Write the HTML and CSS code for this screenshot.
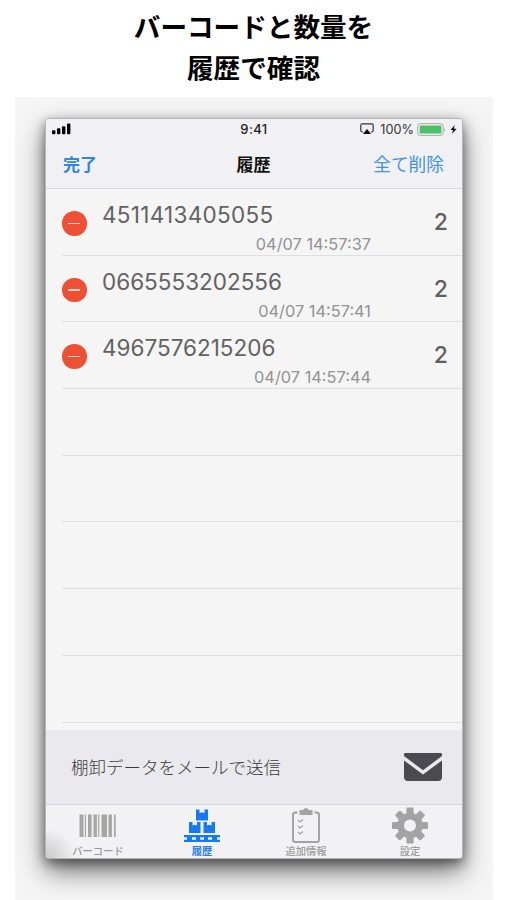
FILE: index.html
```html
<!DOCTYPE html>
<html lang="ja">
<head>
<meta charset="utf-8">
<title>履歴</title>
<link rel="stylesheet" href="styles.css">
</head>
<body>
<h1 class="headline">バーコードと数量を<br>履歴で確認</h1>
<main class="stage">
  <div class="phone">
    <header class="top">
      <div class="status">
        <svg width="20" height="12" viewBox="0 0 20 12"><rect x="1" y="7.2" width="3.4" height="4.1" rx="1"/><rect x="6" y="5.2" width="3.4" height="6.1" rx="1"/><rect x="11" y="3.2" width="3.4" height="8.1" rx="1"/><rect x="16" y="0.5" width="3.4" height="10.8" rx="1"/></svg>
        <span class="clock">9:41</span>
        <span class="power">
          <svg width="14" height="12" viewBox="0 0 14 12"><path d="M3.2 9H2.3Q.8 9 .8 7.5V2.3Q.8.8 2.3.8H11.7Q13.2.8 13.2 2.3V7.5Q13.2 9 11.7 9H10.8" fill="none" stroke="#333" stroke-width="1.2"/><path d="M7 6 11 11H3Z" fill="#000"/></svg>
          <span class="percent">100%</span>
          <svg width="29" height="13" viewBox="0 0 29 13"><rect x=".6" y=".6" width="25.6" height="11.8" rx="3" fill="#f1f1f3" stroke="#aaa" stroke-width="1"/><rect x="2.6" y="2.4" width="21.8" height="8.2" rx="1.2" fill="#4bc269"/><path d="M27.3 4.5Q29 6.5 27.3 8.5Z" fill="#aaa"/></svg>
          <svg class="bolt" width="7" height="11" viewBox="0 0 7 11"><path d="M4.7 1 .5 6.1H3L2 10 6.600 4.700H3.900Z" fill="#111"/></svg>
        </span>
      </div>
      <nav class="navbar"><span class="done">完了</span><span class="title">履歴</span><span class="clear">全て削除</span></nav>
    </header>
    <ul class="list">
      <li class="row"><i class="minus"></i><span class="code wide">4511413405055</span><time class="date">04/07 14:57:37</time><b class="count">2</b></li>
      <li class="row"><i class="minus"></i><span class="code">0665553202556</span><time class="date">04/07 14:57:41</time><b class="count">2</b></li>
      <li class="row"><i class="minus"></i><span class="code">4967576215206</span><time class="date">04/07 14:57:44</time><b class="count">2</b></li>
      <li class="row"></li><li class="row"></li><li class="row"></li><li class="row"></li><li class="row"></li>
    </ul>
    <section class="mail">
      <span>棚卸データをメールで送信</span>
      <svg width="38" height="28" viewBox="0 0 38 28"><path d="M0 3V1.2Q0 0 1.2 0H36.8Q38 0 38 1.2V3L19 17.2Z" fill="#4b4a50"/><path d="M0 7.4 19 21.4 38 7.4V24Q38 28 34 28H4Q0 28 0 24Z" fill="#4b4a50"/></svg>
    </section>
    <footer class="tabs">
      <div class="tab"><svg width="38" height="40" viewBox="0 0 38 40"><path d="M.5 9.500h4v22.500h-4zM5.800 9.500h1.200v22.500H5.800zM9 9.500h3.600v22.500H9zM14.500 9.500h3.400v22.500h-3.400zM19.100 9.500h1.200v22.500h-1.200zM22.500 9.500h5.500v22.500h-5.500zM29.500 9.500h3.400v22.500h-3.400zM35 9.500h1.700v22.500H35z" fill="#a6a6a4"/></svg><span>バーコード</span></div>
      <div class="tab active"><svg width="38" height="40" viewBox="0 0 38 40"><g fill="#147af3"><path d="M13 4.500H16.500V8L19 7.200 21.500 8V4.500H25V15.500H13Z"/><path d="M6 17H9.500V20.500L11.700 19.700 14 20.500V17H17.500V28H6ZM20.500 17H24V20.500L26.200 19.700 28.500 20.500V17H32V28H20.500Z"/><path fill-rule="evenodd" d="M1 30H37V32.300H34V34.700H37V37H1V34.700H4V32.300H1ZM9 32.300V34.700H13V32.300ZM17.200 32.300V34.700H21V32.300ZM25 32.300V34.700H29V32.300Z"/></g></svg><span>履歴</span></div>
      <div class="tab"><svg width="38" height="40" viewBox="0 0 38 40"><g fill="none" stroke="#a3a3a3"><path d="M10.500 7.500H8.500Q6 7.500 6 10V34.500Q6 37 8.500 37H29.500Q32 37 32 34.500V10Q32 7.500 29.500 7.500H27.500" stroke-width="2"/><path d="M11 15l2 2 3-2.500M11 21l2 2 3-2.500M11 27l2 2 3-2.500" stroke-width="1.200"/></g><path d="M12.500 5H16Q19 1 22 5H25.500V10H12.500Z" fill="#a3a3a3"/></svg><span>追加情報</span></div>
      <div class="tab"><svg width="38" height="40" viewBox="0 0 38 40"><g fill="#a3a3a3" transform="translate(19 20.500)"><g id="teeth"><rect x="-3.600" y="-18" width="7.200" height="36" rx="1.200"/><rect x="-18" y="-3.600" width="36" height="7.200" rx="1.200"/></g><use href="#teeth" transform="rotate(45)"/><circle r="12.800"/><circle r="6" fill="#f2f2f4"/></g></svg><span>設定</span></div>
    </footer>
  </div>
</main>
</body>
</html>
```
FILE: styles.css
```css
* { box-sizing: border-box; }
body { margin: 0; height: 900px; overflow: hidden; background: #fff; font-family: Inter, "Noto Sans CJK JP", sans-serif; }
svg { display: block; flex: none; }
.headline { margin: 0; height: 97px; padding-top: 5px; text-align: center; font: 700 26.600px/41px "Noto Sans CJK JP", sans-serif; color: #000; }
.stage { margin: 0 14px 0 15px; height: 803px; padding: 21px 30px 0; background: #f5f5f5; overflow: hidden; }
.phone { height: 741px; width: 418px; display: flex; flex-direction: column; border-radius: 4px; background: #f5f5f5; border: 1px solid #b5b5b7; box-shadow: 0 13px 26px rgba(0,0,0,.5), 0 4px 12px rgba(0,0,0,.45); overflow: hidden; }
.top { height: 70px; flex: none; background: #f1f1f3; border-bottom: 1px solid #d9d9db; }
.status { height: 20px; display: grid; grid-template-columns: 1fr auto 1fr; align-items: center; padding: 0 5px 0 5px; }
.clock { font-size: 13px; font-weight: 500; color: #222; letter-spacing: .4px; }
.power { display: flex; justify-content: flex-end; align-items: center; gap: 2px; }
.percent { font-size: 12.700px; color: #333; margin: 0 1px 0 4px; }
.bolt { margin-left: 2px; }
.navbar { height: 49px; padding: 0 18px 0 17px; display: grid; grid-template-columns: 1fr auto 1fr; align-items: center; font: 400 17.700px/25px "Noto Sans CJK JP", sans-serif; }
.done { color: #2f86e4; font-weight: 700; font-size: 17px; }
.title { color: #111; font-weight: 700; font-size: 17px; }
.clear { color: #4292e6; text-align: right; }
.list { height: 541px; flex: none; margin: 0; padding: 0 0 0 16px; list-style: none; overflow: hidden; }
.row { height: 66.700px; border-bottom: 1px solid #dfdfe1; display: grid; grid-template: 44px 22px / 40px 269px 1fr; }
.minus { grid-row: 1 / 3; width: 24.500px; height: 24.500px; margin-top: 22px; border-radius: 50%; background: #ee5033; display: grid; place-items: center; }
.minus::after { content: ""; width: 12px; height: 1.500px; background: #fbd2ca; }
.code { font-size: 22.500px; line-height: 30px; padding-top: 11px; color: #626262; font-weight: 400; }
.wide { letter-spacing: .3px; }
.date { grid-column: 2; grid-row: 2; font-size: 16.350px; line-height: 22px; text-align: right; color: #929292; }
.count { grid-column: 3; grid-row: 1 / 3; font-size: 23px; line-height: 67px; font-weight: 500; color: #5f5f5f; text-align: right; padding-right: 14px; }
.mail { height: 75px; flex: none; padding: 0 20px 0 25px; display: flex; align-items: center; justify-content: space-between; background: #eae9ee; border-bottom: 1px solid #d5d5dc; font: 300 17.500px/25px "Noto Sans CJK JP", sans-serif; color: #3c3b40; }
.mail span { margin-top: -2px; }
.tabs { flex: 1; display: grid; grid-template-columns: repeat(4, 1fr); background: radial-gradient(circle at 0 100%, #c9c9c9 0, #f2f2f4 30px); }
.tab { display: flex; flex-direction: column; align-items: center; font: 500 10.300px/12px "Noto Sans CJK JP", sans-serif; color: #9b9b9b; }
.active { color: #2580ee; font-weight: 700; }
```
